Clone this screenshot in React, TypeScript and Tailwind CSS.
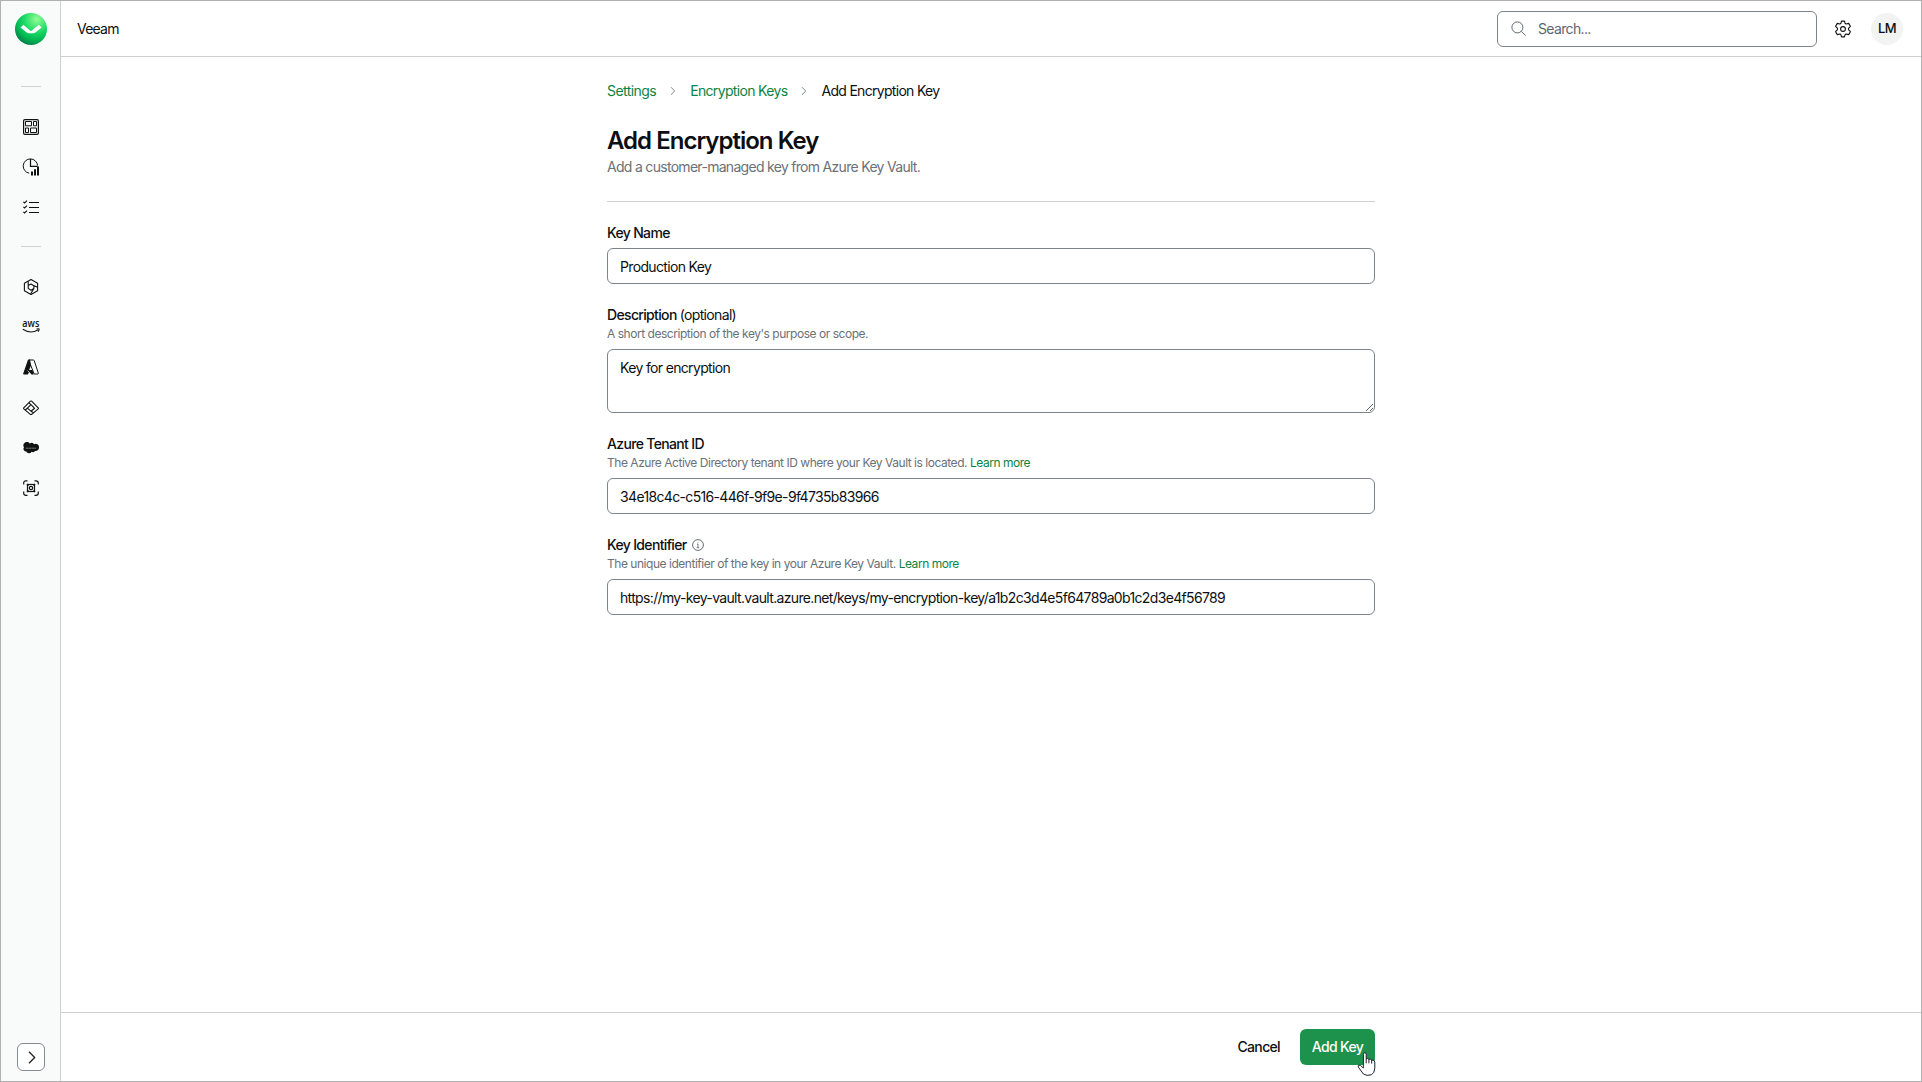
import type { ReactNode } from "react";
import { ChevronRight } from "lucide-react";

const VeeamLogo = () => (
  <svg width="32" height="32" viewBox="0 0 32 32" className="ml-px">
    <defs>
      <radialGradient id="veeam" cx="0.68" cy="0.2" r="0.85">
        <stop offset="0" stopColor="#93fc93" />
        <stop offset="0.45" stopColor="#1fdc68" />
        <stop offset="0.75" stopColor="#00b952" />
        <stop offset="1" stopColor="#007f49" />
      </radialGradient>
    </defs>
    <circle cx="16" cy="16" r="16" fill="url(#veeam)" />
    <path
      d="M5.6 14.4 8.3 11.8 15.9 18.2 23.9 11.8 26.6 14.4 20.4 19.4Q19.4 20.2 18.2 20.2H13.8Q12.6 20.2 11.7 19.4Z"
      fill="#fff"
    />
  </svg>
);

const DashboardIcon = () => (
  <svg width="16" height="16" viewBox="0 0 16 16" fill="none" stroke="#111">
    <rect x="0.6" y="0.6" width="14.8" height="14.8" rx="1.3" strokeWidth="1.2" />
    <path d="M2.5 2.5h6v4.3h-6zM10.5 2.5h3v4.3h-3zM2.5 9h3v4.5h-3zM7.5 9h6v4.5h-6z" />
  </svg>
);

const ReportsIcon = () => (
  <svg width="18" height="18" viewBox="0 0 18 18" fill="none" stroke="#111">
    <path d="M7.2 15.2A7.2 7.2 0 1 1 15.6 7.6" />
    <path d="M8.5 1v7.4h7" strokeWidth="1.2" />
    <path d="M10 17.4v-3.8M13 17.4v-6.2M16 17.4V8.6" strokeWidth="2" />
  </svg>
);

const TasksIcon = () => (
  <svg width="16" height="16" viewBox="0 0 16 16" fill="none" stroke="#111" strokeWidth="1.1">
    <path d="M6 3.5h10M6 8.5h10M6 13.5h10" />
    <path d="M0.4 2.8 1.6 4 4 1.6M0.4 7.8 1.6 9 4 6.6M0.4 12.8 1.6 14 4 11.6" />
  </svg>
);

const VdcIcon = () => (
  <svg
    width="16"
    height="16"
    viewBox="0 0 16 16"
    fill="none"
    stroke="#111"
    strokeWidth="1.1"
    strokeLinejoin="round"
  >
    <path d="M8 .6 14.6 4.2v7.6L8 15.4 1.4 11.8V4.2Z" />
    <path d="M5.2 2.2v7.2L8 11.2 10.9 9.5V6.8L8 5 5.2 6.6M9.6 5.9l4.8 2.3M10.9 9.5 7.6 15" />
  </svg>
);

const AwsIcon = () => (
  <svg width="20" height="32" viewBox="-1 -8 20 32" fill="none" stroke="#111">
    <text
      x="0.3"
      y="8.3"
      textLength="17"
      lengthAdjust="spacingAndGlyphs"
      fontFamily="Open Sans, sans-serif"
      fontSize="10.6"
      fontWeight="600"
      fill="#111"
      stroke="none"
      className="tracking-normal"
    >
      aws
    </text>
    <path d="M.8 10.3Q8.5 15.2 15.8 11M14.6 10q2.9-.6 2.5.4-.1 1.2-1 2.2" strokeWidth="1.1" />
  </svg>
);

const AzureIcon = () => (
  <svg width="16" height="16" viewBox="0 0 16 16" strokeLinejoin="round">
    <path
      d="M6 1h4.4q.6 0 .8.6l4.1 12.5q.2.8-.6.9h-3.5L6.8 4Z"
      fill="#fff"
      stroke="#111"
      strokeWidth="1"
    />
    <path d="M5.6.6H7l1 6-2 4.6-1.8.2 1.8 2-1.2 2H.9Q-.1 15.2.3 14.2L4.8 1.2Q5 .6 5.6.6Z" fill="#111" />
    <path d="M4.4 11h5l1.4 4.4H8.6Z" fill="#111" />
  </svg>
);

const EntraIcon = () => (
  <svg
    width="16"
    height="16"
    viewBox="0 0 16 16"
    fill="none"
    stroke="#111"
    strokeLinejoin="round"
    strokeWidth="1.1"
  >
    <path d="M7.4 1.2q.6-.5 1.2 0l6.6 6.6q.5.6 0 1.1L8.7 14.3q-.7.5-1.4 0L.8 8.9q-.5-.5 0-1.1Z" />
    <path d="m8 4.7 3.6 3.6L8 11.2 4.4 8.2ZM8 4.7 5.9 2.9M4.4 8.2 2.2 10M8 11.2l2.6 1.5" />
  </svg>
);

const SalesforceIcon = () => (
  <svg width="16" height="12" viewBox="0 0 16 12">
    <path
      d="M6.7 1.6A3 3 0 0 1 11 2.2a3.4 3.4 0 0 1 5 3.3c0 2.4-2 3.8-4 3.4a2.6 2.6 0 0 1-3.4.9A3 3 0 0 1 3.3 9.6 2.8 2.8 0 0 1 1 5.2 3.1 3.1 0 0 1 6.7 1.6Z"
      fill="#111"
    />
    <path d="M2.7 6.2h10.6" stroke="#aaa" strokeWidth=".8" strokeDasharray="1.1 .4" />
  </svg>
);

const WorkloadIcon = () => (
  <svg width="16" height="16" viewBox="0 0 16 16" fill="none" stroke="#111" strokeWidth="1.2">
    <path d="M.7 4.5V3Q.7.8 3 .8h1.5M11.5.8H13q2.3 0 2.3 2.2v1.5M15.3 11.5V13q0 2.3-2.3 2.3h-1.5M4.5 15.3H3Q.7 15.3.7 13v-1.5" />
    <rect x="4.5" y="4.5" width="7" height="7" />
    <circle cx="8" cy="8" r="1.7" />
    <path d="m4 4 1.5 1.5M12 4l-1.5 1.5M4 12l1.5-1.5M12 12l-1.5-1.5" strokeWidth="1.4" />
  </svg>
);

const SearchIcon = () => (
  <svg width="16" height="16" viewBox="0 0 16 16" fill="none" stroke="#5c6670">
    <circle cx="6.4" cy="6.4" r="5.5" />
    <path d="m10.4 10.4 4.3 4.2" />
  </svg>
);

const GearIcon = () => (
  <svg
    width="18"
    height="18"
    viewBox="0 0 18 18"
    fill="none"
    stroke="#111"
    strokeWidth="1.1"
    strokeLinejoin="round"
  >
    <path d="M7.5 1.1h3l.6 2.2q.3.7 1.1.7l2.5-.6 1.7 2.9-1.7 1.8q-.6.9 0 1.8l1.7 1.8-1.7 2.9-2.5-.6q-.8 0-1.1.7l-.6 2.2h-3l-.6-2.2q-.3-.7-1.1-.7l-2.5.6-1.7-2.9 1.7-1.8q.6-.9 0-1.8L1.6 6.3l1.7-2.9 2.5.6q.8 0 1.1-.7Z" />
    <circle cx="9" cy="9" r="2.4" />
  </svg>
);

const InfoIcon = () => (
  <svg width="12" height="12" viewBox="0 0 12 12" fill="none" stroke="#555d64" strokeWidth=".9">
    <circle cx="6" cy="6" r="5.4" />
    <path d="M5 5.1h1v3.6M4.7 8.7h2.6M5.6 3.3h.8" strokeWidth=".8" />
  </svg>
);

const HandCursor = () => (
  <svg
    width="19"
    height="24"
    viewBox="0 0 19 24"
    fill="#fff"
    stroke="#1c2030"
    strokeLinejoin="round"
    className="absolute left-[57px] top-[23px]"
  >
    <path d="M6.4 14.2V2.4Q6.5.8 7.8.7q1.3.1 1.4 1.7v4.4q1.3-.7 2.7.5 1.5-.6 2.7.7 2.8-.3 3.2 2v6.2q-.2 4.8-3.4 6.6-4.7 1.5-8-.8L1.4 15.2q-.8-1.5.4-2 2.1-.5 3.4 2l1.2.8Z" />
    <path d="M9.2 6.8v4.5M11.9 7.3v4M14.7 8v3.6" />
  </svg>
);

const Slot = ({ children }: { children: ReactNode }) => (
  <div className="flex h-10 w-full items-center justify-center">{children}</div>
);

const SlotDivider = () => (
  <div className="flex h-10 w-full items-center justify-center pb-px">
    <div className="h-px w-5 bg-[#cdd1d2]" />
  </div>
);

const Sidebar = () => (
  <aside className="flex w-[60px] shrink-0 flex-col items-center border-r border-[#cdd1d2] bg-[#f9fbfa] pt-3 pb-[10px]">
    <VeeamLogo />
    <nav className="mt-[22px] flex w-full flex-1 flex-col pl-px">
      <SlotDivider />
      <Slot><DashboardIcon /></Slot>
      <Slot><ReportsIcon /></Slot>
      <Slot><TasksIcon /></Slot>
      <SlotDivider />
      <Slot><VdcIcon /></Slot>
      <Slot><AwsIcon /></Slot>
      <Slot><AzureIcon /></Slot>
      <div className="mt-px">
        <Slot><EntraIcon /></Slot>
        <Slot><SalesforceIcon /></Slot>
        <Slot><WorkloadIcon /></Slot>
      </div>
    </nav>
    <button className="ml-px flex size-7 items-center justify-center rounded-md border border-[#858b93] bg-white pl-px">
      <svg width="8" height="13" viewBox="0 0 8 13" fill="none" stroke="#222" strokeWidth="1.3">
        <path d="m1 .8 5.7 5.7L1 12.2" />
      </svg>
    </button>
  </aside>
);

const Header = () => (
  <header className="flex h-14 shrink-0 items-center border-b border-[#cdd1d2] pl-4 pr-[18px]">
    <span className="flex-1 tracking-[-0.055em]">Veeam</span>
    <div className="flex h-9 w-80 items-center gap-[11px] rounded-md border border-[#7d848c] pl-[13px] text-[#5c6670]">
      <SearchIcon />
      <span>Search...</span>
    </div>
    <div className="ml-[17px]">
      <GearIcon />
    </div>
    <div className="ml-[19px] flex size-8 items-center justify-center rounded-full bg-[#f1f4f3] text-[13px] font-medium">
      LM
    </div>
  </header>
);

type FieldProps = {
  label: ReactNode;
  hint?: string;
  learnMore?: boolean;
  children: ReactNode;
};

const Field = ({ label, hint, learnMore, children }: FieldProps) => (
  <div className="flex flex-col">
    <div className="flex h-5 items-center font-medium">{label}</div>
    {hint && (
      <p className="mt-px text-xs tracking-[-0.039em] text-[#6a7178]">
        {hint}
        {learnMore && <a className="ml-[3px] text-[#0b8442]">Learn more</a>}
      </p>
    )}
    {children}
  </div>
);

const inputClass =
  "w-full rounded-md border border-[#7d848c] bg-white px-3 text-sm text-[#0c0f12] outline-none";

const App = () => {
  return (
    <div className="flex h-[1082px] w-[1922px] border border-[#b0b0b0] bg-white font-[Inter,sans-serif] text-sm tracking-[-0.047em] text-[#0c0f12]">
      <Sidebar />
      <div className="flex flex-1 flex-col">
        <Header />

        <main className="flex w-[768px] flex-1 flex-col self-center pt-6">
          {/* Breadcrumb */}
          <div className="flex h-5 items-center">
            <a className="tracking-[-0.04em] text-[#0b8442]">Settings</a>
            <ChevronRight className="mx-2.5 size-3.5 text-[#7d848c]" strokeWidth={1.7} />
            <a className="text-[#0b8442]">Encryption Keys</a>
            <ChevronRight className="mx-2.5 size-3.5 text-[#7d848c]" strokeWidth={1.7} />
            <span className="tracking-[-0.05em]">Add Encryption Key</span>
          </div>

          <h1 className="mt-6 text-2xl font-semibold tracking-[-0.041em]">Add Encryption Key</h1>
          <p className="tracking-[-0.05em] text-[#6a7178]">
            Add a customer-managed key from Azure Key Vault.
          </p>
          <div className="mt-6 h-px bg-[#cdd1d2]" />

          {/* Key form */}
          <div className="mt-[21px] flex flex-col gap-[21px]">
            <Field label="Key Name">
              <input className={`${inputClass} mt-[5px] h-9`} defaultValue="Production Key" />
            </Field>
            <Field
              label={<>Description&nbsp;<span className="font-normal">(optional)</span></>}
              hint="A short description of the key's purpose or scope."
            >
              <textarea
                className={`${inputClass} mt-[7px] h-16 py-2`}
                defaultValue="Key for encryption"
              />
            </Field>
            <Field
              label="Azure Tenant ID"
              hint="The Azure Active Directory tenant ID where your Key Vault is located."
              learnMore
            >
              <input
                className={`${inputClass} mt-[7px] h-9`}
                defaultValue="34e18c4c-c516-446f-9f9e-9f4735b83966"
              />
            </Field>
            <Field
              label={<>Key Identifier<span className="ml-[5px]"><InfoIcon /></span></>}
              hint="The unique identifier of the key in your Azure Key Vault."
              learnMore
            >
              <input
                className={`${inputClass} mt-[7px] h-9`}
                defaultValue="https://my-key-vault.vault.azure.net/keys/my-encryption-key/a1b2c3d4e5f64789a0b1c2d3e4f56789"
              />
            </Field>
          </div>
        </main>

        <footer className="flex h-[69px] shrink-0 justify-center border-t border-[#cdd1d2] pt-4">
          <div className="flex h-9 w-[768px] items-center justify-end gap-5 font-medium">
            <button>Cancel</button>
            <div className="relative">
              <button className="h-9 w-[75px] rounded-md bg-[#1d924c] text-white">Add Key</button>
              <HandCursor />
            </div>
          </div>
        </footer>
      </div>
    </div>
  );
};

export default App;
